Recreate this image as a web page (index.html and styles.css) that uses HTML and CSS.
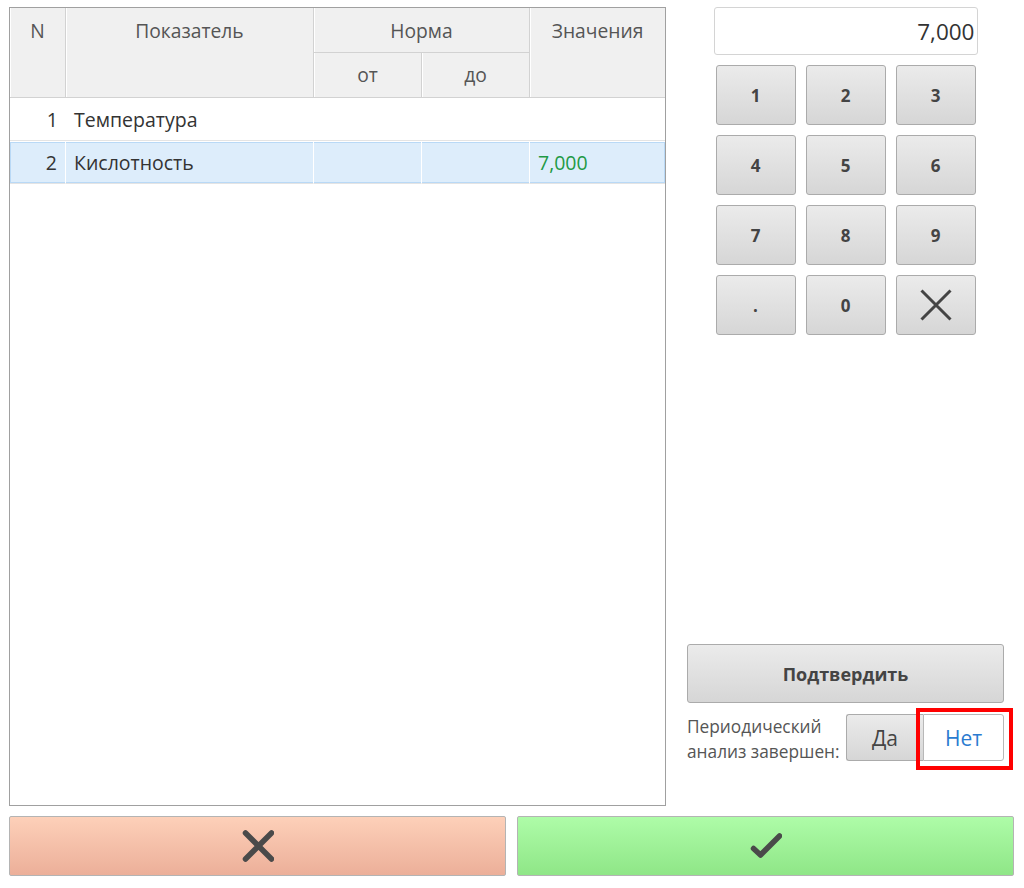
FILE: index.html
```html
<!DOCTYPE html>
<html lang="ru">
<head>
<meta charset="utf-8">
<title>Периодический анализ</title>
<link rel="stylesheet" href="styles.css">
</head>
<body>
<div class="app">
  <div class="main">
    <div class="grid-panel">
      <table class="grid">
        <colgroup>
          <col class="c-n"><col class="c-name"><col class="c-from"><col class="c-to"><col class="c-val">
        </colgroup>
        <thead>
          <tr class="h1">
            <th rowspan="2" class="top">N</th>
            <th rowspan="2" class="top">Показатель</th>
            <th colspan="2" class="norma">Норма</th>
            <th rowspan="2" class="top last">Значения</th>
          </tr>
          <tr class="h2">
            <th>от</th>
            <th>до</th>
          </tr>
        </thead>
        <tbody>
          <tr class="row">
            <td class="num">1</td>
            <td>Температура</td>
            <td></td>
            <td></td>
            <td></td>
          </tr>
          <tr class="row selected">
            <td class="num">2</td>
            <td>Кислотность</td>
            <td></td>
            <td></td>
            <td class="val">7,000</td>
          </tr>
        </tbody>
      </table>
    </div>
    <div class="side">
      <div class="display">7,000</div>
      <div class="keypad">
        <button class="key">1</button>
        <button class="key">2</button>
        <button class="key">3</button>
        <button class="key">4</button>
        <button class="key">5</button>
        <button class="key">6</button>
        <button class="key">7</button>
        <button class="key">8</button>
        <button class="key">9</button>
        <button class="key">.</button>
        <button class="key">0</button>
        <button class="key key-clear" aria-label="Очистить">
          <svg width="32" height="32" viewBox="0 0 32 32"><path d="M1.5 1.5 L30.5 30.5 M30.5 1.5 L1.5 30.5" stroke="#444" stroke-width="3" fill="none"/></svg>
        </button>
      </div>
      <div class="confirm-block">
        <button class="confirm-btn">Подтвердить</button>
        <div class="periodic">
          <span class="periodic-label">Периодический<br>анализ завершен:</span>
          <div class="toggle">
            <button class="tg tg-yes">Да</button>
            <button class="tg tg-no">Нет</button>
          </div>
        </div>
      </div>
    </div>
  </div>
  <div class="actions">
    <button class="act act-cancel" aria-label="Отмена">
      <svg width="32" height="32" viewBox="0 0 32 32"><path d="M3.5 3 L29.5 29 M29.5 3 L3.5 29" stroke="#4a4a4a" stroke-width="5.5" stroke-linecap="round" fill="none"/></svg>
    </button>
    <button class="act act-ok" aria-label="OK">
      <svg width="32" height="32" viewBox="0 0 32 32"><path d="M3.5 18.5 L10.5 25 L29.5 6" stroke="#4a4a4a" stroke-width="5.5" stroke-linecap="round" stroke-linejoin="round" fill="none"/></svg>
    </button>
  </div>
</div>
</body>
</html>
```
FILE: styles.css
```css
* { box-sizing: border-box; }

html, body {
  margin: 0;
  background: #fff;
}

body {
  font-family: "Open Sans", "Noto Sans", sans-serif;
  color: #333;
}

.app {
  display: flex;
  flex-direction: column;
  gap: 10px;
  padding: 7px 10px 0 9px;
}

.main {
  display: flex;
  height: 799px;
}

.grid-panel {
  width: 657px;
  border: 1px solid #a0a0a0;
  background: #fff;
}

.grid {
  width: 655px;
  border-collapse: separate;
  border-spacing: 0;
  table-layout: fixed;
  font-size: 19.5px;
}

.c-n { width: 56px; }
.c-name { width: 248px; }
.c-from { width: 108px; }
.c-to { width: 108px; }
.c-val { width: 135px; }

.grid th {
  background: #f0f0f0;
  color: #555;
  font-size: 19.25px;
  font-weight: normal;
  text-align: center;
  line-height: 24px;
  padding: 0;
  border-right: 1px solid #d2d2d2;
  border-bottom: 1px solid #d2d2d2;
  box-shadow: inset 1px 0 #fff;
}

.grid th.last { border-right: 0; }

.grid th.top {
  vertical-align: top;
  padding-top: 11px;
}

.grid .h1 { height: 45px; }
.grid .h2 { height: 45px; }

.grid th.norma { vertical-align: middle; padding-top: 2px; }

.grid td {
  padding: 0 8px;
  height: 43px;
  line-height: 24px;
  white-space: nowrap;
  border-bottom: 1px solid #e4e4e4;
  vertical-align: middle;
  padding-top: 2px;
}

.grid td.num {
  text-align: right;
}

.grid .selected td {
  background: #ddedfb;
  border-top: 1px solid #fff;
  border-right: 1px solid #fff;
  padding-top: 0;
  box-shadow: inset 0 1px #b9d9f6, inset 0 -1px #b9d9f6;
}

.grid .selected td:first-child {
  box-shadow: inset 0 1px #b9d9f6, inset 0 -1px #b9d9f6, inset 1px 0 #b9d9f6;
}

.grid .selected td:last-child {
  border-right: 0;
  box-shadow: inset 0 1px #b9d9f6, inset 0 -1px #b9d9f6, inset -1px 0 #b9d9f6;
}

.grid td.val { color: #1f9a45; }

.side {
  flex: 1;
  display: flex;
  flex-direction: column;
  align-items: center;
  padding: 0 10px 0 21px;
}

.display {
  width: 264px;
  height: 48px;
  border: 1px solid #d4d4d4;
  border-radius: 3px;
  text-align: right;
  padding-right: 2px;
  font-size: 22.5px;
  line-height: 48px;
  color: #333;
}

.keypad {
  margin-top: 10px;
  display: grid;
  grid-template-columns: repeat(3, 80px);
  grid-auto-rows: 60px;
  gap: 10px;
}

.key, .confirm-btn, .tg-yes {
  font-family: inherit;
  color: #444;
  background: linear-gradient(#ebebeb, #d6d6d6);
  border: 1px solid #ababab;
  border-radius: 3px;
  padding: 0;
}

.key {
  font-size: 17px;
  font-weight: bold;
  display: flex;
  align-items: center;
  justify-content: center;
}

.confirm-block {
  margin-top: auto;
  width: 100%;
  padding-bottom: 45px;
}

.confirm-btn {
  display: block;
  width: 100%;
  height: 59px;
  font-size: 18px;
  font-weight: bold;
}

.periodic {
  margin-top: 11px;
  height: 47px;
  display: flex;
  align-items: center;
  justify-content: space-between;
}

.periodic-label {
  font-size: 17.3px;
  line-height: 25px;
  color: #555;
  white-space: nowrap;
  padding-top: 2px;
}

.toggle {
  display: flex;
  height: 47px;
}

.tg {
  font-family: inherit;
  font-size: 21px;
  height: 47px;
  padding: 0;
}

.tg-yes {
  width: 77px;
  border-radius: 3px 0 0 3px;
  border-right: 0;
  color: #444;
}

.tg-no {
  position: relative;
  width: 81px;
  background: #fff;
  color: #2b7bd0;
  border: 1px solid #b8b8b8;
  border-radius: 0 3px 3px 0;
}

.tg-no::after {
  content: "";
  position: absolute;
  top: -7px;
  left: -8px;
  right: -10px;
  bottom: -10px;
  border: 4px solid #f00;
  pointer-events: none;
}

.actions {
  display: flex;
  gap: 11px;
}

.act {
  flex: 1;
  height: 60px;
  border: 1px solid #b4b4b4;
  border-radius: 2px;
  padding: 0;
  display: flex;
  align-items: center;
  justify-content: center;
}

.act-cancel { background: linear-gradient(#fdd0b9, #ecaf99); }
.act-ok { background: linear-gradient(#aefca8, #8fe687); }
```
